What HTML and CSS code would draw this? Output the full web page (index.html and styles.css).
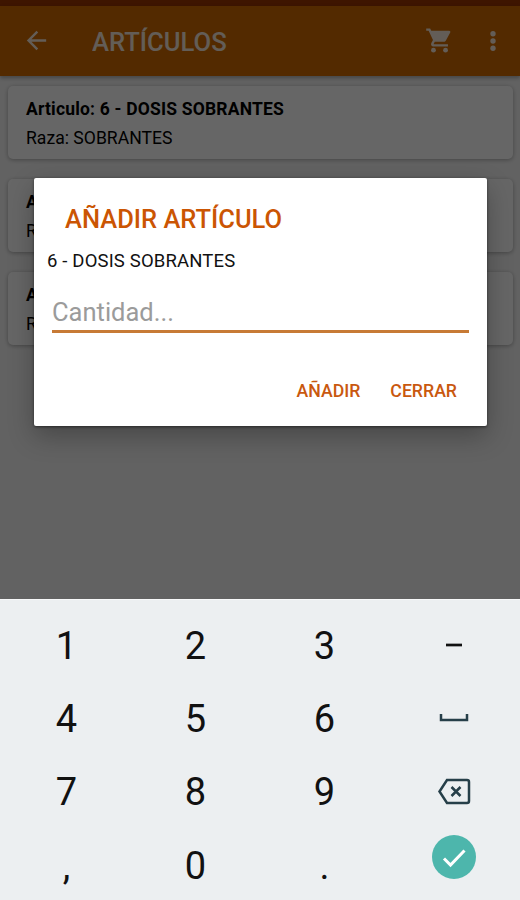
FILE: index.html
```
<!DOCTYPE html>
<html lang="es">
<head>
    <meta charset="UTF-8">
    <meta name="viewport" content="width=device-width, initial-scale=1.0">
    <title>Artículos</title>
    <link rel="stylesheet" href="styles.css">
</head>
<body>
    <div class="screen">
        <div class="app">
            <div class="statusbar"></div>
            <header class="toolbar">
                <svg class="back" viewBox="0 0 24 24"><path d="M20 11H7.83l5.59-5.59L12 4l-8 8 8 8 1.41-1.41L7.83 13H20v-2z"/></svg>
                <h1 class="toolbar-title">ARTÍCULOS</h1>
                <svg class="cart" viewBox="0 0 24 24">
                    <path d="M1 2h3.270l.94 2H20c.8 0 1.200.8.880 1.480l-3.580 6.490c-.34.620-1 1.030-1.750 1.030H8.100l-.9 1.630c-.1.200 0 .370.220.370H19v2H7c-1.500 0-2.500-1.600-1.750-2.960l1.350-2.450L3 4H1z"/>
                    <circle cx="7" cy="20" r="2"/>
                    <circle cx="17" cy="20" r="2"/>
                </svg>
                <svg class="more" viewBox="0 0 24 24">
                    <circle cx="12" cy="5.800" r="2.300"/>
                    <circle cx="12" cy="12" r="2.300"/>
                    <circle cx="12" cy="18.200" r="2.300"/>
                </svg>
            </header>
            <main class="list">
                <div class="card">
                    <p class="card-title">Articulo: 6 - DOSIS SOBRANTES</p>
                    <p class="card-text">Raza: SOBRANTES</p>
                </div>
                <div class="card">
                    <p class="card-title">A</p>
                    <p class="card-text">R</p>
                </div>
                <div class="card">
                    <p class="card-title">A</p>
                    <p class="card-text">R</p>
                </div>
            </main>
        </div>

        <div class="overlay">
            <div class="dialog">
                <h2 class="dialog-title">AÑADIR ARTÍCULO</h2>
                <p class="dialog-text">6 - DOSIS SOBRANTES</p>
                <input class="dialog-input" type="text" placeholder="Cantidad...">
                <div class="dialog-buttons">
                    <button type="button" class="button add">AÑADIR</button>
                    <button type="button" class="button close">CERRAR</button>
                </div>
            </div>
        </div>

        <div class="keypad">
            <div class="key">1</div>
            <div class="key">2</div>
            <div class="key">3</div>
            <div class="key"><svg width="32" height="32" viewBox="0 0 32 32"><path class="dash" d="M8 15h16"/></svg></div>
            <div class="key">4</div>
            <div class="key">5</div>
            <div class="key">6</div>
            <div class="key"><svg width="32" height="32" viewBox="0 0 32 32"><path class="line" d="M3 11v6h26v-6"/></svg></div>
            <div class="key">7</div>
            <div class="key">8</div>
            <div class="key">9</div>
            <div class="key"><svg width="34" height="32" viewBox="0 0 34 32"><path class="line" d="M10 4h20q2 0 2 2v19q0 2-2 2H10L2.500 15.500zM14.500 11l9 9M23.500 11l-9 9"/></svg></div>
            <div class="key">,</div>
            <div class="key">0</div>
            <div class="key">.</div>
            <div class="key"><div class="done"><svg width="44" height="44" viewBox="0 0 44 44"><path d="M12 23.500l6.500 6.500L32.500 15.500"/></svg></div></div>
        </div>
    </div>
</body>
</html>
```
FILE: styles.css
```
* {
    box-sizing: border-box;
}
body {
    margin: 0;
    font-family: Roboto, "Liberation Sans", sans-serif;
}
h1, h2, p {
    margin: 0;
}
.screen {
    position: relative;
    display: flex;
    flex-direction: column;
    width: 520px;
    height: 900px;
    overflow: hidden;
}
.app {
    height: 599px;
    background-color: #f5f5f5;
}
.statusbar {
    height: 6px;
    background-color: #9b3500;
}
.toolbar {
    display: flex;
    align-items: center;
    height: 70px;
    padding: 0 13px 0 22px;
    background-color: #d06a00;
    box-shadow: 0 2px 4px rgba(0, 0, 0, 0.3);
    color: #fff;
}
.toolbar svg {
    margin-bottom: 1px;
    fill: #fff;
    opacity: 0.85;
}
.back {
    width: 29px;
    height: 29px;
}
.toolbar-title {
    flex: 1;
    padding: 1px 0 0 41px;
    font-size: 25.6px;
    font-weight: 500;
    opacity: 0.85;
}
.cart {
    width: 29px;
    height: 29px;
    margin-right: 25px;
}
.more {
    width: 28px;
    height: 30px;
}
.list {
    display: flex;
    flex-direction: column;
    gap: 20px;
    padding: 10px 7px 0 8px;
}
.card {
    height: 73px;
    padding: 11px 18px 0;
    border-radius: 5px;
    background-color: #fff;
    box-shadow: 0 1px 4px rgba(0, 0, 0, 0.3);
    color: #000;
}
.card-title {
    font-size: 17.5px;
    font-weight: 700;
    letter-spacing: 0.19px;
    line-height: 24px;
}
.card-text {
    margin-top: 5px;
    font-size: 17.6px;
    line-height: 24px;
}
.overlay {
    position: absolute;
    top: 0;
    left: 0;
    width: 520px;
    height: 599px;
    padding: 178px 33px 0 34px;
    background-color: rgba(0, 0, 0, 0.6);
    overflow: hidden;
}
.dialog {
    display: flex;
    flex-direction: column;
    height: 248px;
    border-radius: 2px;
    background-color: #fff;
    box-shadow: 0 10px 26px rgba(0, 0, 0, 0.28), 0 1px 3px rgba(0, 0, 0, 0.5);
}
.dialog-title {
    margin: 26px 0 0 31px;
    color: #cb5503;
    font-size: 25.5px;
    font-weight: 500;
    line-height: 30px;
}
.dialog-text {
    margin: 15px 0 0 13px;
    color: #111;
    font-size: 18.5px;
    letter-spacing: 0.16px;
    line-height: 24px;
}
.dialog-input {
    height: 44px;
    margin: 16px 18px 0;
    padding: 4px 0 0;
    border: none;
    border-bottom: 3px solid #c77a35;
    outline: none;
    font-family: inherit;
    font-size: 25.5px;
}
.dialog-input::placeholder {
    color: #9b9b9b;
    opacity: 1;
}
.dialog-buttons {
    display: flex;
    justify-content: flex-end;
    gap: 30px;
    margin: 46px 30px 0 0;
}
.button {
    padding: 0;
    border: none;
    background: none;
    color: #c9580f;
    font-family: inherit;
    font-size: 17.7px;
    font-weight: 500;
    line-height: 24px;
}
.keypad {
    display: grid;
    grid-template-columns: repeat(4, 129px);
    grid-auto-rows: 73.3px;
    height: 301px;
    padding: 9px 0 0 2px;
    border-top: 1px solid #f8f9fa;
    background-color: #eceff1;
    overflow: hidden;
}
.key {
    display: flex;
    align-items: center;
    justify-content: center;
    color: #111;
    font-size: 38px;
}
.key svg {
    fill: none;
    stroke: #263f49;
    stroke-width: 2.5;
}
.key .dash {
    stroke: #111;
    stroke-width: 2.7;
}
.done {
    width: 44px;
    height: 44px;
    margin-bottom: 17px;
    border-radius: 50%;
    background-color: #4db6ac;
}
.done svg {
    display: block;
    stroke: #fff;
    stroke-width: 3;
}
```
